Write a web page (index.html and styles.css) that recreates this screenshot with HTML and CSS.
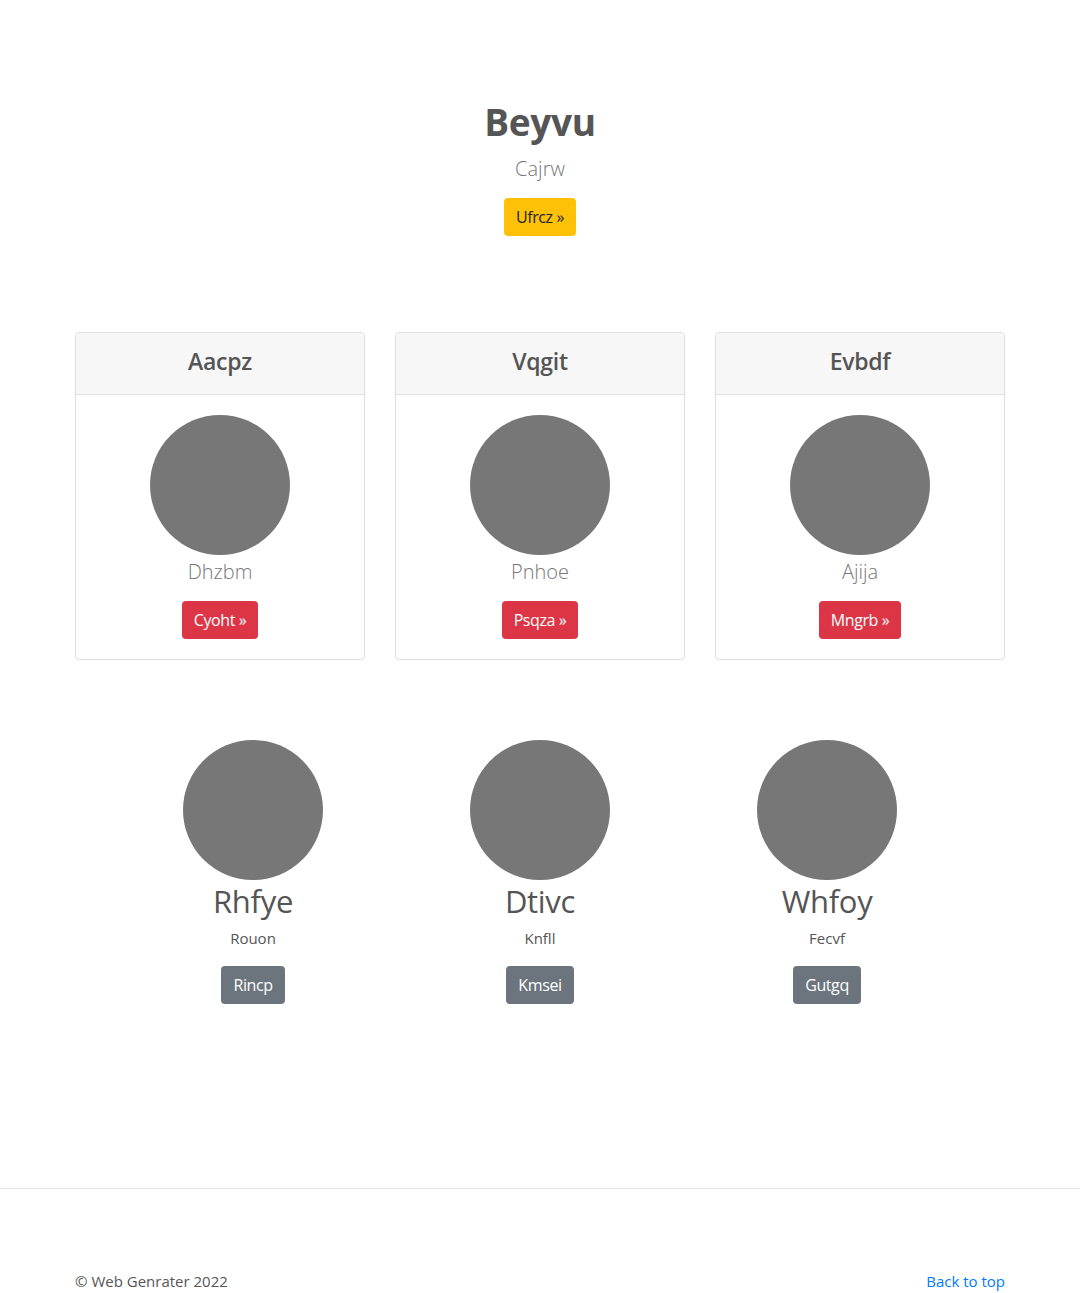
FILE: index.html
```html
<!DOCTYPE html>
<html lang="en">
<head>
<meta charset="utf-8">
<title>Beyvu</title>
<link rel="stylesheet" href="styles.css">
</head>
<body>
<main>
  <section class="hero">
    <h1 class="hero-title">Beyvu</h1>
    <p class="lead">Cajrw</p>
    <a class="btn btn-warning" href="#">Ufrcz »</a>
  </section>

  <section class="container cards">
    <div class="card">
      <div class="card-header"><h4>Aacpz</h4></div>
      <div class="card-body">
        <svg class="avatar" width="140" height="140" viewBox="0 0 140 140"><circle cx="70" cy="70" r="70" fill="#777"/></svg>
        <p class="lead">Dhzbm</p>
        <a class="btn btn-danger" href="#">Cyoht »</a>
      </div>
    </div>
    <div class="card">
      <div class="card-header"><h4>Vqgit</h4></div>
      <div class="card-body">
        <svg class="avatar" width="140" height="140" viewBox="0 0 140 140"><circle cx="70" cy="70" r="70" fill="#777"/></svg>
        <p class="lead">Pnhoe</p>
        <a class="btn btn-danger" href="#">Psqza »</a>
      </div>
    </div>
    <div class="card">
      <div class="card-header"><h4>Evbdf</h4></div>
      <div class="card-body">
        <svg class="avatar" width="140" height="140" viewBox="0 0 140 140"><circle cx="70" cy="70" r="70" fill="#777"/></svg>
        <p class="lead">Ajija</p>
        <a class="btn btn-danger" href="#">Mngrb »</a>
      </div>
    </div>
  </section>

  <section class="marketing">
    <div class="feature">
      <svg class="avatar" width="140" height="140" viewBox="0 0 140 140"><circle cx="70" cy="70" r="70" fill="#777"/></svg>
      <h2>Rhfye</h2>
      <p>Rouon</p>
      <a class="btn btn-secondary" href="#">Rincp</a>
    </div>
    <div class="feature">
      <svg class="avatar" width="140" height="140" viewBox="0 0 140 140"><circle cx="70" cy="70" r="70" fill="#777"/></svg>
      <h2>Dtivc</h2>
      <p>Knfll</p>
      <a class="btn btn-secondary" href="#">Kmsei</a>
    </div>
    <div class="feature">
      <svg class="avatar" width="140" height="140" viewBox="0 0 140 140"><circle cx="70" cy="70" r="70" fill="#777"/></svg>
      <h2>Whfoy</h2>
      <p>Fecvf</p>
      <a class="btn btn-secondary" href="#">Gutgq</a>
    </div>
  </section>
</main>

<footer class="footer">
  <div class="container footer-inner">
    <p>© Web Genrater 2022</p>
    <a href="#">Back to top</a>
  </div>
</footer>
</body>
</html>
```

FILE: styles.css
```css
* { box-sizing: border-box; }

html, body {
  margin: 0;
  padding: 0;
}

body {
  font-family: "Open Sans", "Noto Sans", "DejaVu Sans", sans-serif;
  font-size: 16px;
  line-height: 1.5;
  color: #555;
  background: #fff;
}

p { margin: 0; }

.container {
  width: 930px;
  margin: 0 auto;
}

.hero {
  padding-top: 98px;
  text-align: center;
}

.hero-title {
  margin: 0 0 8px;
  font-size: 37px;
  line-height: 48px;
  font-weight: 700;
  color: #555;
  letter-spacing: -0.3px;
}

.lead {
  font-size: 20px;
  line-height: 30px;
  font-weight: 300;
  color: #777;
  margin-bottom: 14px;
}

.btn {
  display: inline-block;
  height: 38px;
  padding: 0 12px;
  font-size: 16px;
  line-height: 38px;
  border-radius: 4px;
  text-decoration: none;
  letter-spacing: -0.4px;
}

.btn-warning { background: #ffc107; color: #212529; }
.btn-danger { background: #dc3545; color: #fff; }
.btn-secondary { background: #6c757d; color: #fff; }

.cards {
  margin-top: 96px;
  display: grid;
  grid-template-columns: repeat(3, 1fr);
  gap: 30px;
}

.card {
  border: 1px solid #dfdfdf;
  border-radius: 4px;
  text-align: center;
  overflow: hidden;
}

.card-header {
  background: #f7f7f7;
  border-bottom: 1px solid #dfdfdf;
  height: 62px;
  display: flex;
  align-items: center;
  justify-content: center;
  padding-bottom: 6px;
}

.card-header h4 {
  margin: 0;
  font-size: 23px;
  line-height: 28px;
  font-weight: 600;
  color: #555;
  letter-spacing: -0.3px;
}

.card-body {
  padding: 20px 20px 20px;
  display: flex;
  flex-direction: column;
  align-items: center;
}

.card-body .lead {
  margin-top: 2px;
  margin-bottom: 14px;
}

.avatar { display: block; }

.marketing {
  margin: 80px auto 0;
  width: 861px;
  display: grid;
  grid-template-columns: repeat(3, 1fr);
}

.feature {
  display: flex;
  flex-direction: column;
  align-items: center;
}

.feature h2 {
  margin: 2px 0 6px;
  font-size: 31px;
  line-height: 38px;
  font-weight: 400;
  color: #555;
  letter-spacing: -0.3px;
}

.feature p {
  font-size: 15px;
  line-height: 24px;
  margin-bottom: 16px;
}

.footer {
  margin-top: 184px;
  border-top: 1px solid #e5e5e5;
  padding-top: 80px;
}

.footer-inner {
  display: flex;
  justify-content: space-between;
  align-items: center;
  font-size: 15px;
  line-height: 24px;
}

.footer-inner a {
  color: #007bff;
  text-decoration: none;
}
```
